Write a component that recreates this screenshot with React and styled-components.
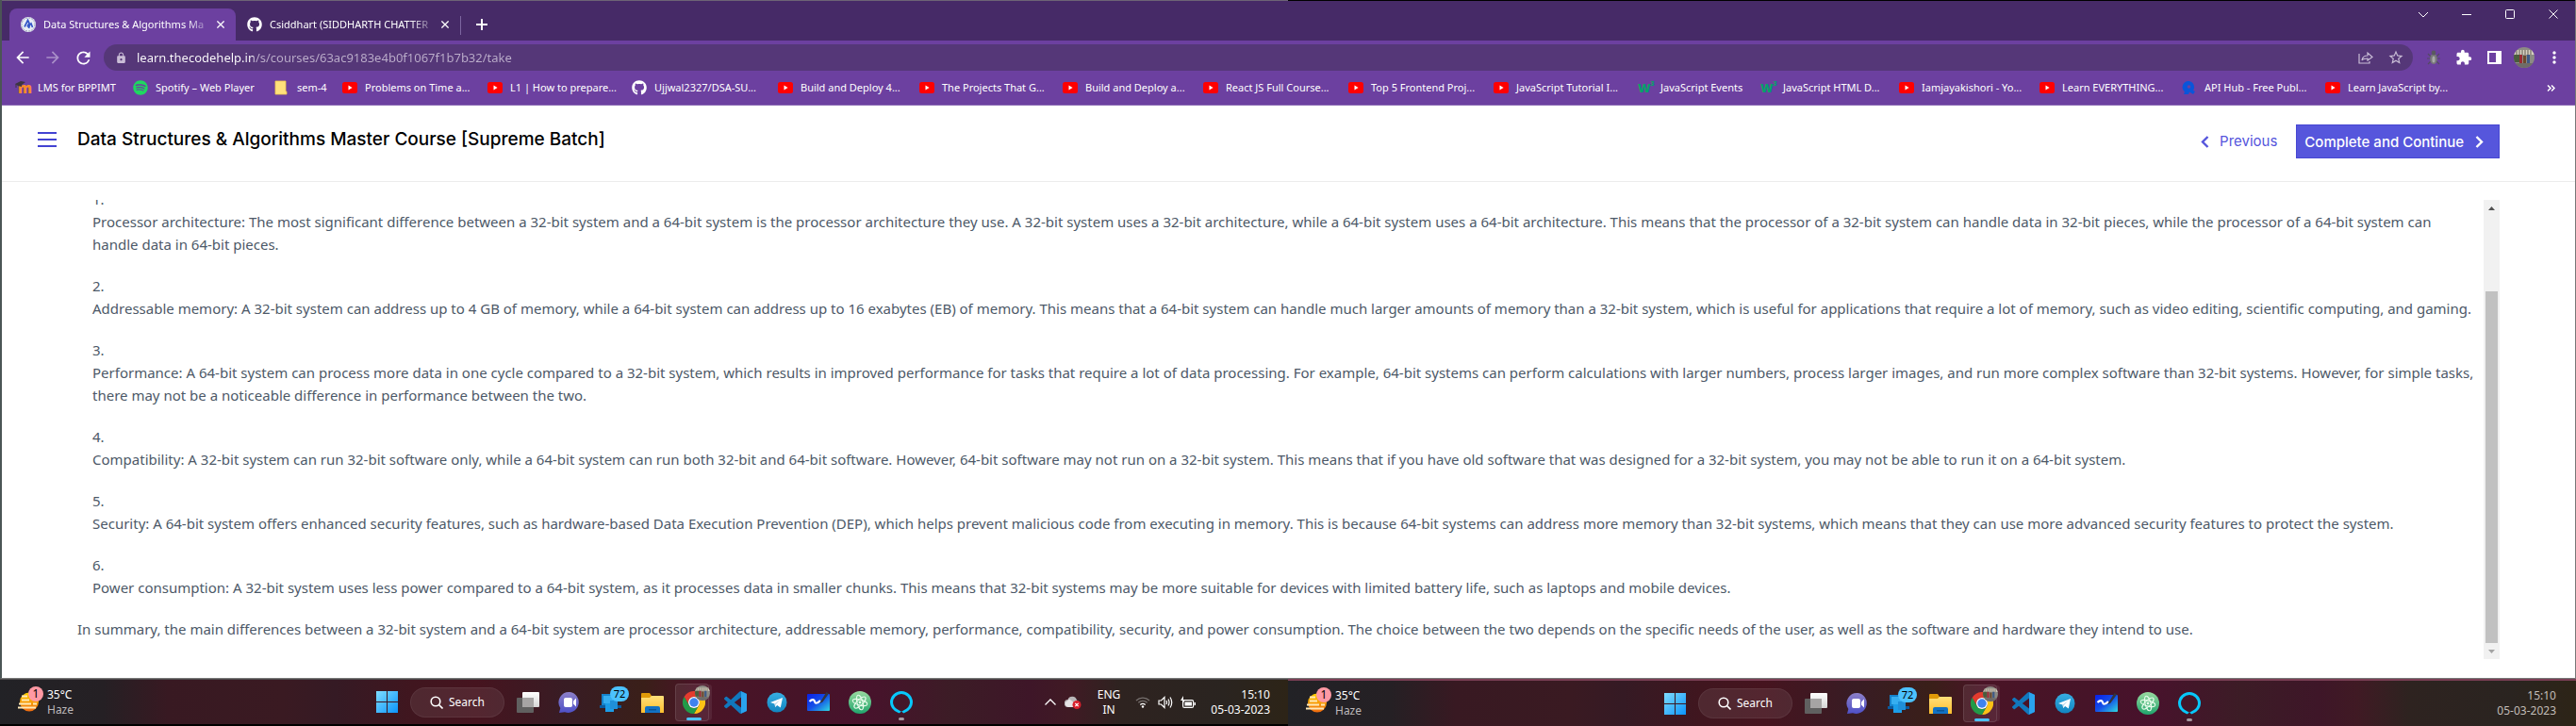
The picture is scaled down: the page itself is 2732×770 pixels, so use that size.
import React from 'react';
import styled, { createGlobalStyle } from 'styled-components';
import { FaGithub, FaSpotify } from 'react-icons/fa';
import { MdArrowBack, MdArrowForward, MdRefresh, MdLock, MdStarBorder, MdExtension, MdMoreVert } from 'react-icons/md';

const Global = createGlobalStyle`
  *, *::before, *::after { box-sizing: border-box; }
  body { margin: 0; background: #000; font-family: "Noto Sans", "Open Sans", sans-serif; }
  button, input { font: inherit; color: inherit; }
  button { border: 0; padding: 0; background: none; cursor: pointer; }
  svg { display: block; flex: none; }
`;

/* ---------- shared pieces ---------- */

const Desktop = styled.div`
  min-height: 100vh;
  display: flex;
  flex-direction: column;
`;

const Browser = styled.div`
  flex: 1;
  display: flex;
  flex-direction: column;
  border-left: 2px solid #4b5555;
  border-right: 1px solid #777;
  border-bottom: 1px solid #777;
  background: #fff;
`;

const IconButton = styled.button`
  display: grid;
  place-items: center;
  flex: none;
  width: ${(p) => p.$w || 32}px;
  height: ${(p) => p.$h || 28}px;
  color: ${(p) => p.$color || '#fff'};
`;

/* ---------- browser chrome ---------- */

const TabStrip = styled.div`
  display: flex;
  align-items: flex-end;
  height: 43px;
  padding-left: 8px;
  background: #462a67;
  border-top: 1px solid;
  border-image: linear-gradient(to right, #6d6476 50%, #000 50%) 1;
`;

const Tab = styled.div`
  display: flex;
  align-items: center;
  width: ${(p) => (p.$active ? 240 : 238)}px;
  height: 34px;
  padding: 0 8px 0 12px;
  border-radius: 8px 8px 0 0;
  background: ${(p) => (p.$active ? '#6c40a0' : 'transparent')};
  color: #fff;
`;

const TabTitle = styled.span`
  flex: 1;
  margin-left: 8px;
  overflow: hidden;
  white-space: nowrap;
  font-size: 11px;
  line-height: 16px;
  mask-image: linear-gradient(to right, #000 84%, transparent);
`;

const TabDivider = styled.span`
  align-self: center;
  width: 1px;
  height: 20px;
  margin-top: 9px;
  background: #7d66a0;
`;

const WindowControls = styled.div`
  display: flex;
  align-self: flex-start;
  margin-left: auto;
`;

const Toolbar = styled.div`
  display: flex;
  align-items: center;
  height: 36px;
  padding: 4px 6px;
  background: #6c40a0;
`;

const AddressBar = styled.label`
  flex: 1;
  display: flex;
  align-items: center;
  height: 28px;
  margin: 0 6px;
  padding: 0 2px 0 12px;
  border-radius: 14px;
  background: #553778;
  color: #c9bdd6;
`;

const AddressInput = styled.input`
  flex: 1;
  height: 28px;
  margin-left: 10px;
  padding: 0;
  border: 0;
  outline: 0;
  font-size: 13px;
  color: transparent;
  background: linear-gradient(to right, #fff 124px, #bcaecb 124px);
  background-clip: text;
`;

const Bookmarks = styled.nav`
  display: flex;
  align-items: center;
  height: 33px;
  padding: 0 20px 4px 14px;
  background: #6c40a0;
  border-bottom: 1px solid #8c6ab4;
`;

const Bookmark = styled.a`
  display: flex;
  align-items: center;
  gap: 8px;
  flex: 0 0 ${(p) => p.$w}px;
  color: #fff;
  font-size: 11px;
  line-height: 16px;
  white-space: nowrap;
  text-decoration: none;
`;

const MoreBookmarks = styled(IconButton)`
  margin-left: auto;
`;

const W3Mark = styled.span`
  width: 16px;
  color: #06a06a;
  font-size: 13px;
  font-weight: 900;
  line-height: 16px;
  display: flex;
`;

const W3Power = styled.sup`
  font-size: 7px;
  line-height: 8px;
`;

const MoodleMark = styled.span`
  width: 16px;
  padding-left: 3px;
  color: #f68a28;
  font-size: 15px;
  font-weight: 900;
  line-height: 16px;
  position: relative;
`;

const MoodleCap = styled.svg`
  position: absolute;
  left: 0;
  top: 0;
`;

const Play = () => (
  <svg width="16" height="16" viewBox="0 0 16 16">
    <rect y="2" width="16" height="12" rx="2.5" fill="#f00" />
    <path d="M6.5 5.6v4.8L10.6 8z" fill="#fff" />
  </svg>
);
const Note = () => (
  <svg width="16" height="16" viewBox="0 0 16 16">
    <path d="M1 1h11v11h1v3H1z" fill="#ffe07c" stroke="#f1c84c" strokeWidth=".8" />
  </svg>
);
const W3 = () => (
  <W3Mark>W<W3Power>3</W3Power></W3Mark>
);
const Moodle = () => (
  <MoodleMark>
    m
    <MoodleCap width="11" height="8" viewBox="0 0 11 8">
      <path d="M0 4 6 1l5 1-4 3v2L3 6z" fill="#3d3540" />
      <path d="M1 4v4" stroke="#3d3540" />
    </MoodleCap>
  </MoodleMark>
);
const ApiHub = () => (
  <svg width="16" height="16" viewBox="0 0 16 16">
    <path d="M7 1a6.500 6.500 0 0 0-4 11.500L2 15h5l1-2.500 4 2.500 2-3-2-1A6.500 6.500 0 0 0 7 1z" fill="#0a55da" />
    <circle cx="7.500" cy="7" r="1.800" fill="#6c40a0" />
  </svg>
);
const Spot = () => <FaSpotify size={16} color="#1ed760" />;
const Hub = () => <FaGithub size={16} />;

const BOOKMARKS = [
  ['LMS for BPPIMT', Moodle, 125],
  ['Spotify – Web Player', Spot, 150],
  ['sem-4', Note, 72],
  ['Problems on Time a...', Play, 154],
  ['L1 | How to prepare...', Play, 153],
  ['Ujjwal2327/DSA-SU...', Hub, 155],
  ['Build and Deploy 4...', Play, 150],
  ['The Projects That G...', Play, 152],
  ['Build and Deploy a...', Play, 149],
  ['React JS Full Course...', Play, 154],
  ['Top 5 Frontend Proj...', Play, 154],
  ['JavaScript Tutorial I...', Play, 153],
  ['JavaScript Events', W3, 130],
  ['JavaScript HTML D...', W3, 147],
  ['Iamjayakishori - Yo...', Play, 149],
  ['Learn EVERYTHING...', Play, 151],
  ['API Hub - Free Publ...', ApiHub, 152],
  ['Learn JavaScript by...', Play, 150],
];

const Cross = ({ size = 8, width = 1.6 }) => (
  <svg width={size} height={size} viewBox="0 0 10 10" fill="none" stroke="currentColor" strokeWidth={width}>
    <path d="M.5.5l9 9M9.500.5l-9 9" />
  </svg>
);

const Favicon = () => (
  <svg width="16" height="16" viewBox="0 0 16 16">
    <circle cx="8" cy="8" r="8" fill="#e9eef6" />
    <circle cx="8" cy="8" r="7" fill="none" stroke="#8a93a6" strokeWidth=".8" strokeDasharray="2 1" />
    <path d="M4 10.500 7.500 3.500l1.500 3-2 4M8.500 12l1-3.500 1.500-1.500 1.500 4" fill="none" stroke="#3558c8" strokeWidth="1.700" />
  </svg>
);

const Portrait = ({ size }) => (
  <svg width={size} height={size} viewBox="0 0 22 22">
    <defs>
      <clipPath id={`portrait-${size}`}><circle cx="11" cy="11" r="11" /></clipPath>
    </defs>
    <g clipPath={`url(#portrait-${size})`}>
      <rect width="22" height="22" fill="#8c8b84" />
      <path d="M0 3h22v5H0z" fill="#d8d2c2" />
      <path d="M3 3v5M6 3v5M9 3v5M12 3v5M15 3v5M18 3v5" stroke="#5f5a50" />
      <path d="M0 8h6v8H0z" fill="#4a5c3c" />
      <path d="M6 8h3v9H6z" fill="#9c2b34" />
      <path d="M10 9h3v9h-3z" fill="#6d4a2c" />
      <path d="M14 8h3v9h-3z" fill="#3e5a86" />
      <path d="M0 17h22v5H0z" fill="#6f6c68" />
    </g>
  </svg>
);

const Bug = () => (
  <svg width="14" height="16" viewBox="0 0 14 16">
    <path d="M1 4l3 3M13 4l-3 3M0 9h14M1 15l3-3M13 15l-3-3" stroke="#544a62" strokeWidth="1.200" />
    <ellipse cx="7" cy="9.500" rx="3.800" ry="5.500" fill="#77777a" />
    <ellipse cx="7" cy="10" rx="1.600" ry="3.500" fill="#a9a9aa" />
    <circle cx="7" cy="3" r="2.400" fill="#59595f" />
  </svg>
);

function BrowserChrome() {
  return (
    <header>
      <TabStrip>
        <Tab $active>
          <Favicon />
          <TabTitle>Data Structures &amp; Algorithms Ma</TabTitle>
          <IconButton $w={16} $h={16} aria-label="Close tab"><Cross /></IconButton>
        </Tab>
        <Tab>
          <FaGithub size={16} />
          <TabTitle>Csiddhart (SIDDHARTH CHATTER</TabTitle>
          <IconButton $w={16} $h={16} aria-label="Close tab"><Cross /></IconButton>
        </Tab>
        <TabDivider />
        <IconButton $w={44} $h={34} aria-label="New tab">
          <svg width="12" height="12" viewBox="0 0 12 12" stroke="currentColor" strokeWidth="2"><path d="M6 0v12M0 6h12" /></svg>
        </IconButton>
        <WindowControls>
          <IconButton $w={46} aria-label="Search tabs">
            <svg width="12" height="7" viewBox="0 0 12 7" fill="none" stroke="currentColor"><path d="M1 1l5 5 5-5" /></svg>
          </IconButton>
          <IconButton $w={46} aria-label="Minimise">
            <svg width="10" height="10" viewBox="0 0 10 10" stroke="currentColor"><path d="M0 5.500h10" /></svg>
          </IconButton>
          <IconButton $w={46} aria-label="Maximise">
            <svg width="10" height="10" viewBox="0 0 10 10" fill="none" stroke="currentColor"><rect x=".5" y=".5" width="9" height="9" rx="1" /></svg>
          </IconButton>
          <IconButton $w={46} aria-label="Close"><Cross size={10} width={1} /></IconButton>
        </WindowControls>
      </TabStrip>
      <Toolbar>
        <IconButton aria-label="Back"><MdArrowBack size={20} /></IconButton>
        <IconButton $color="#a98fc8" aria-label="Forward"><MdArrowForward size={20} /></IconButton>
        <IconButton aria-label="Reload"><MdRefresh size={21} /></IconButton>
        <AddressBar>
          <MdLock size={13} />
          <AddressInput aria-label="Address" defaultValue="learn.thecodehelp.in/s/courses/63ac9183e4b0f1067f1b7b32/take" />
          <IconButton $color="#c9bdd6" aria-label="Share">
            <svg width="16" height="14" viewBox="0 0 16 14" fill="none" stroke="currentColor" strokeWidth="1.200">
              <path d="M1 3v10h11v-2M4 10c.5-4 3-5 6-5V2l5 4.500L10 10V8c-3 0-5 .5-6 2z" />
            </svg>
          </IconButton>
          <IconButton $color="#c9bdd6" aria-label="Bookmark this tab"><MdStarBorder size={18} /></IconButton>
        </AddressBar>
        <IconButton aria-label="Debug extension"><Bug /></IconButton>
        <IconButton aria-label="Extensions"><MdExtension size={18} /></IconButton>
        <IconButton aria-label="Side panel">
          <svg width="15" height="14" viewBox="0 0 15 14"><path d="M0 0h15v14H0zM2 2v10h7V2z" fill="currentColor" fillRule="evenodd" /></svg>
        </IconButton>
        <IconButton aria-label="Profile"><Portrait size={22} /></IconButton>
        <IconButton aria-label="Menu"><MdMoreVert size={20} /></IconButton>
      </Toolbar>
      <Bookmarks aria-label="Bookmarks">
        {BOOKMARKS.map(([label, Icon, w]) => (
          <Bookmark key={label} href="#" $w={w}><Icon />{label}</Bookmark>
        ))}
        <MoreBookmarks $w={12} aria-label="More bookmarks">
          <svg width="9" height="7" viewBox="0 0 9 7" fill="none" stroke="currentColor" strokeWidth="1.500"><path d="M1 .5l3 3-3 3M5 .5l3 3-3 3" /></svg>
        </MoreBookmarks>
      </Bookmarks>
    </header>
  );
}

/* ---------- course page ---------- */

const CourseBar = styled.div`
  display: flex;
  align-items: center;
  height: 81px;
  padding: 0 80px 4px 38px;
  border-bottom: 1px solid #ececec;
  font-family: Inter, "Open Sans", sans-serif;
`;

const CourseTitle = styled.h1`
  flex: 1;
  margin: 0 0 4px 22px;
  color: #000;
  font-size: 19px;
  font-weight: 500;
  line-height: 24px;
`;

const MenuButton = styled.button`
  margin-bottom: 4px;
  color: #4343d2;
`;

const PreviousLink = styled.a`
  display: flex;
  align-items: center;
  gap: 11px;
  margin-right: 20px;
  color: #5555dc;
  font-size: 15px;
  line-height: 24px;
  text-decoration: none;
`;

const ContinueButton = styled.button`
  display: flex;
  align-items: center;
  gap: 12px;
  height: 36px;
  padding: 0 16px 0 8px;
  border: 1px solid #4747d3;
  background: #5656dc;
  color: #fff;
  font-size: 15px;
  font-weight: 500;
`;

const LessonArea = styled.main`
  flex: 1;
  display: flex;
  margin: 19px 80px 20px 80px;
`;

const Lesson = styled.article`
  flex: 1;
  padding-right: 6px;
  overflow: hidden;
  color: #4d5968;
  font-size: 15px;
  line-height: 24px;
`;

const Points = styled.ol`
  list-style: none;
  margin: -13px 0 20px;
  padding: 0 0 0 16px;
`;

const Point = styled.li`
  & + & { margin-top: 20px; }
`;

const Number = styled.div``;

const Paragraph = styled.p`
  margin: 0;
`;

const ScrollTrack = styled.div`
  display: flex;
  flex-direction: column;
  width: 17px;
  background: #f1f1f1;
`;

const ScrollThumb = styled.div`
  flex: 1;
  margin: 80px 2px 0;
  background: #c1c1c1;
`;

const ScrollArrow = styled.button`
  display: grid;
  place-items: center;
  height: 17px;
  color: ${(p) => p.$color};
`;

const POINTS = [
  'Processor architecture: The most significant difference between a 32-bit system and a 64-bit system is the processor architecture they use. A 32-bit system uses a 32-bit architecture, while a 64-bit system uses a 64-bit architecture. This means that the processor of a 32-bit system can handle data in 32-bit pieces, while the processor of a 64-bit system can handle data in 64-bit pieces.',
  'Addressable memory: A 32-bit system can address up to 4 GB of memory, while a 64-bit system can address up to 16 exabytes (EB) of memory. This means that a 64-bit system can handle much larger amounts of memory than a 32-bit system, which is useful for applications that require a lot of memory, such as video editing, scientific computing, and gaming.',
  'Performance: A 64-bit system can process more data in one cycle compared to a 32-bit system, which results in improved performance for tasks that require a lot of data processing. For example, 64-bit systems can perform calculations with larger numbers, process larger images, and run more complex software than 32-bit systems. However, for simple tasks, there may not be a noticeable difference in performance between the two.',
  'Compatibility: A 32-bit system can run 32-bit software only, while a 64-bit system can run both 32-bit and 64-bit software. However, 64-bit software may not run on a 32-bit system. This means that if you have old software that was designed for a 32-bit system, you may not be able to run it on a 64-bit system.',
  'Security: A 64-bit system offers enhanced security features, such as hardware-based Data Execution Prevention (DEP), which helps prevent malicious code from executing in memory. This is because 64-bit systems can address more memory than 32-bit systems, which means that they can use more advanced security features to protect the system.',
  'Power consumption: A 32-bit system uses less power compared to a 64-bit system, as it processes data in smaller chunks. This means that 32-bit systems may be more suitable for devices with limited battery life, such as laptops and mobile devices.',
];

const Chevron = ({ flip }) => (
  <svg width="9" height="13" viewBox="0 0 9 13" fill="none" stroke="currentColor" strokeWidth="2.400">
    <path d={flip ? 'M7.500 1 2 6.500l5.500 5.500' : 'M1.500 1 7 6.500 1.500 12'} />
  </svg>
);

function CoursePage() {
  return (
    <>
      <CourseBar>
        <MenuButton aria-label="Toggle curriculum">
          <svg width="20" height="16" viewBox="0 0 20 16" fill="currentColor"><path d="M0 0h20v2H0zM0 7h20v2H0zM0 14h20v2H0z" /></svg>
        </MenuButton>
        <CourseTitle>Data Structures &amp; Algorithms Master Course [Supreme Batch]</CourseTitle>
        <PreviousLink href="#"><Chevron flip />Previous</PreviousLink>
        <ContinueButton>Complete and Continue<Chevron /></ContinueButton>
      </CourseBar>
      <LessonArea>
        <Lesson>
          <Points>
            {POINTS.map((text, i) => (
              <Point key={i}>
                <Number>{i + 1}.</Number>
                <Paragraph>{text}</Paragraph>
              </Point>
            ))}
          </Points>
          <Paragraph>
            In summary, the main differences between a 32-bit system and a 64-bit system are processor architecture, addressable memory, performance, compatibility, security, and power consumption. The choice between the two depends on the specific needs of the user, as well as the software and hardware they intend to use.
          </Paragraph>
        </Lesson>
        <ScrollTrack>
          <ScrollArrow $color="#505050" aria-label="Scroll up">
            <svg width="7" height="4" viewBox="0 0 7 4" fill="currentColor"><path d="M0 4 3.500 0 7 4z" /></svg>
          </ScrollArrow>
          <ScrollThumb />
          <ScrollArrow $color="#a3a3a3" aria-label="Scroll down">
            <svg width="7" height="4" viewBox="0 0 7 4" fill="currentColor"><path d="M0 0h7L3.500 4z" /></svg>
          </ScrollArrow>
        </ScrollTrack>
      </LessonArea>
    </>
  );
}

/* ---------- task bars ---------- */

const TaskBars = styled.footer`
  display: grid;
  grid-template-columns: 1fr 1fr;
  height: 50px;
`;

const TaskBar = styled.div`
  display: flex;
  align-items: center;
  padding: ${(p) => (p.$second ? '0 21px 0 19px' : '0 19px 0 19px')};
  border-top: ${(p) => (p.$second ? '2px solid #7a3f55' : '1px solid #4e4a4c')};
  border-bottom: ${(p) => (p.$second ? 0 : 2)}px solid #000;
  background: linear-gradient(to right, #222226 0, #252024 8%, #381922 13%, #3a1a22 22%, #351a24 26%,
    #40161f 32%, #46141f 37%, #381c24 44%, #3a1f19 50%, #4a1426 54%, #461428 62%, #48122c 67%,
    #3c1c26 74%, #3e1628 80%, #401a24 83%, #2e2320 87%, #2a2420 95%, #2d2417 100%);
  color: #fff;
  font-size: 12px;
  line-height: 16px;
`;

const Weather = styled.button`
  display: flex;
  align-items: center;
  gap: 7px;
  flex: 0 0 369px;
  text-align: left;
`;

const WeatherText = styled.span`
  display: flex;
  flex-direction: column;
`;

const Dim = styled.span`
  color: #bdb9bb;
`;

const AppRow = styled.div`
  display: flex;
  align-items: center;
`;

const AppButton = styled.button`
  position: relative;
  display: grid;
  place-items: center;
  width: 44px;
  height: 40px;
`;

const ActiveApp = styled(AppButton)`
  &::before {
    content: "";
    position: absolute;
    inset: 0 6px 0 2px;
    border: 1px solid #ffffff1c;
    border-radius: 4px;
    background: #ffffff14;
    box-shadow: 4px 0 0 -1px #ffffff12;
  }
  &::after {
    content: "";
    position: absolute;
    left: 14px;
    bottom: 1px;
    width: 16px;
    height: 3px;
    border-radius: 2px;
    background: #4cc2ff;
  }
  svg { position: relative; }
`;

const IdleApp = styled(AppButton)`
  &::after {
    content: "";
    position: absolute;
    left: 19px;
    bottom: 1px;
    width: 6px;
    height: 3px;
    border-radius: 2px;
    background: #a59aa2;
  }
`;

const CountBadge = styled.span`
  position: absolute;
  top: 3px;
  right: 3px;
  min-width: 20px;
  height: 16px;
  border-radius: 8px;
  background: #4cc2ff;
  color: #000;
  font-size: 11px;
  text-align: center;
`;

const ProfileBadge = styled.span`
  position: absolute;
  top: 2px;
  right: 5px;
`;

const WeatherIcon = styled.span`
  position: relative;
  width: 24px;
  height: 24px;
`;

const WeatherBadge = styled.span`
  position: absolute;
  top: -5px;
  right: -3px;
  width: 16px;
  height: 16px;
  border-radius: 50%;
  background: #ff99a4;
  color: #000;
  text-align: center;
`;

const SearchPill = styled.button`
  display: flex;
  align-items: center;
  justify-content: center;
  gap: 6px;
  width: 100px;
  height: 32px;
  margin: 0 3px;
  border: 1px solid #ffffff10;
  border-radius: 16px;
  background: #ffffff14;
`;

const Tray = styled.div`
  display: flex;
  align-items: center;
  gap: 8px;
  margin-left: auto;
`;

const Language = styled.button`
  width: 40px;
  text-align: center;
`;

const Clock = styled.time`
  width: 71px;
  text-align: right;
  color: ${(p) => (p.$dim ? '#c2bdb8' : '#fff')};
`;

const Haze = () => (
  <svg width="24" height="24" viewBox="0 0 24 24">
    <defs><linearGradient id="haze" x2="0" y2="1"><stop stopColor="#ffd000" /><stop offset="1" stopColor="#f06a10" /></linearGradient></defs>
    <circle cx="12" cy="11.500" r="10" fill="url(#haze)" />
    <path d="M4 5.500h6M4 9.500h8M1 13.500h13M16 13.500h4M0 17.500h19" stroke="#ffe9b8" strokeWidth="1.800" />
  </svg>
);
const StartLogo = () => (
  <svg width="23" height="23" viewBox="0 0 23 23">
    <defs><linearGradient id="start" x2="1" y2="1"><stop stopColor="#7fdcff" /><stop offset="1" stopColor="#0a94fb" /></linearGradient></defs>
    <path d="M0 0h11v11H0zM12 0h11v11H12zM0 12h11v11H0zM12 12h11v11H12z" fill="url(#start)" />
  </svg>
);
const TaskView = () => (
  <svg width="24" height="24" viewBox="0 0 24 24">
    <defs><linearGradient id="view" x2="0" y2="1"><stop stopColor="#fff" /><stop offset="1" stopColor="#d4d4d4" /></linearGradient></defs>
    <rect x="6" y="1" width="18" height="16" rx="1" fill="url(#view)" />
    <rect y="7" width="18" height="16" rx="1" fill="#606060" />
    <path d="M6 7h12v10H6z" fill="#a6a4a4" />
  </svg>
);
const Chat = () => (
  <svg width="24" height="24" viewBox="0 0 24 24">
    <defs><linearGradient id="chat" x2="0" y2="1"><stop stopColor="#8d80c8" /><stop offset="1" stopColor="#4e50c8" /></linearGradient></defs>
    <path d="M12.500 1A11 11 0 1 1 7 22.200L1 23l1.300-5A11 11 0 0 1 12.500 1z" fill="url(#chat)" />
    <rect x="6" y="7" width="9" height="10" rx="2" fill="#fff" />
    <path d="M16 10.500 19 7.500v9l-3-3z" fill="#fff" />
  </svg>
);
const PhoneLink = () => (
  <svg width="24" height="24" viewBox="0 0 24 24">
    <path d="M2 3h14v13H2z" fill="#1583cc" />
    <path d="M0 15h23v3H0z" fill="#0a5a9e" />
    <path d="M6 8h9v14H6z" fill="#1b9de8" />
    <path d="M4 5h10v8H4z" fill="#36aef0" />
    <path d="M11 10h8v9h-8z" fill="#1f8fd8" />
  </svg>
);
const Explorer = () => (
  <svg width="24" height="24" viewBox="0 0 24 24">
    <defs><linearGradient id="folder" x2="0" y2="1"><stop stopColor="#ffe07a" /><stop offset="1" stopColor="#ffbe2e" /></linearGradient></defs>
    <path d="M0 3a1 1 0 0 1 1-1h8l2 3v3H0z" fill="#e09a08" />
    <path d="M0 7h9l2-2h12a1 1 0 0 1 1 1v17H0z" fill="url(#folder)" />
    <path d="M4 23v-5a2 2 0 0 1 2-2h12a2 2 0 0 1 2 2v5z" fill="#1272c4" />
    <path d="M8 19h8v1.500H8z" fill="#0b5494" />
  </svg>
);
const Chrome = () => (
  <svg width="24" height="24" viewBox="0 0 48 48">
    <path d="M24 12h20.800A24 24 0 0 0 3.200 12l10.400 18A12 12 0 0 1 24 12z" fill="#e33b2e" />
    <path d="M34.400 30 24 48a24 24 0 0 0 20.800-36H24a12 12 0 0 1 10.400 18z" fill="#fbc116" />
    <path d="M13.600 30 3.200 12A24 24 0 0 0 24 48l10.400-18a12 12 0 0 1-20.800 0z" fill="#229a48" />
    <circle cx="24" cy="24" r="12" fill="#fff" />
    <circle cx="24" cy="24" r="9.500" fill="#3f82ee" />
  </svg>
);
const Code = () => (
  <svg width="24" height="24" viewBox="0 0 24 24">
    <path d="M23.150 2.587L18.210.21a1.494 1.494 0 0 0-1.705.29l-9.460 8.630-4.120-3.128a.999.999 0 0 0-1.276.057L.327 7.261A1 1 0 0 0 .326 8.740L3.899 12 .326 15.260a1 1 0 0 0 .001 1.479L1.650 17.940a.999.999 0 0 0 1.276.057l4.120-3.128 9.460 8.630a1.492 1.492 0 0 0 1.704.29l4.942-2.377A1.500 1.500 0 0 0 24 20.060V3.939a1.500 1.500 0 0 0-.850-1.352zm-5.146 14.861L10.826 12l7.178-5.448v10.896z" fill="#1178bd" />
    <path d="M18 .2 24 3v18l-6 2.800z" fill="#2aa3ee" />
  </svg>
);
const Plane = () => (
  <svg width="24" height="24" viewBox="0 0 24 24">
    <defs><linearGradient id="plane" x2="0" y2="1"><stop stopColor="#37aee2" /><stop offset="1" stopColor="#1185c0" /></linearGradient></defs>
    <circle cx="12" cy="12" r="10.500" fill="url(#plane)" />
    <path d="M5 12 18 7l-2.200 10.500-3.600-2.600-2 2-.7-3.500z" fill="#fff" />
    <path d="M9.500 13.400 15.500 9l-4.800 5.200-.5 2.500z" fill="#b8d8ea" />
  </svg>
);
const Whiteboard = () => (
  <svg width="24" height="24" viewBox="0 0 24 24">
    <defs><linearGradient id="board" x2="1" y2="1"><stop stopColor="#0a1ee8" /><stop offset=".5" stopColor="#1450e8" /><stop offset="1" stopColor="#30d8e0" /></linearGradient></defs>
    <rect y="3" width="24" height="18" rx="1" fill="url(#board)" />
    <path d="M2.500 11c3-3 5-2 5.500 0s2 3 6-1" fill="none" stroke="#fff" strokeWidth="2.200" />
    <path d="M14 11.500 20.500 1l2.500 1.500-6.500 9-3 1.500z" fill="#33343c" />
  </svg>
);
const Atom = () => (
  <svg width="24" height="24" viewBox="0 0 24 24">
    <defs><linearGradient id="atom" x2="0" y2="1"><stop stopColor="#9ad9a0" /><stop offset="1" stopColor="#1fa56c" /></linearGradient></defs>
    <circle cx="12" cy="12" r="12" fill="url(#atom)" />
    <g fill="none" stroke="#e6fbea" strokeWidth="1.100">
      <ellipse cx="12" cy="12" rx="8" ry="3" transform="rotate(15 12 12)" />
      <ellipse cx="12" cy="12" rx="8" ry="3" transform="rotate(75 12 12)" />
      <ellipse cx="12" cy="12" rx="8" ry="3" transform="rotate(135 12 12)" />
    </g>
    <circle cx="12" cy="12" r="1.400" fill="#e6fbea" />
  </svg>
);
const Ring = () => (
  <svg width="24" height="24" viewBox="0 0 24 24" fill="none" stroke="#07c8fb" strokeWidth="3">
    <path d="M10.800 22.600C9.800 21.500 1.500 20 1.500 12a10.500 10.500 0 0 1 21 0c0 8-8.300 9.500-9.300 10.600" />
  </svg>
);

function TrayIcons() {
  return (
    <>
      <IconButton $w={12} aria-label="Show hidden icons">
        <svg width="12" height="7" viewBox="0 0 12 7" fill="none" stroke="currentColor" strokeWidth="1.300"><path d="M.5 6.500 6 1l5.500 5.500" /></svg>
      </IconButton>
      <IconButton $w={20} aria-label="Cloud storage">
        <svg width="18" height="14" viewBox="0 0 18 14">
          <path d="M4 12a4 4 0 0 1-.5-8A5 5 0 0 1 13 4.500 3.500 3.500 0 0 1 13 11z" fill="#b9b6b8" />
          <path d="M5 3.500 13 9l-4 3H4a4 4 0 0 1-3-5z" fill="#e6e4e5" />
          <circle cx="13" cy="9.500" r="4.500" fill="#d8202c" />
          <path d="M11.300 7.800l3.400 3.400M14.700 7.800l-3.400 3.400" stroke="#fff" strokeWidth="1.200" />
        </svg>
      </IconButton>
      <Language>ENG<br />IN</Language>
      <IconButton $w={16} aria-label="Network">
        <svg width="16" height="13" viewBox="0 0 16 13" fill="none" stroke="#fff" strokeWidth="1.300">
          <path d="M1 5a10 10 0 0 1 14 0" opacity=".35" />
          <path d="M3.300 7.300a6.700 6.700 0 0 1 9.400 0" opacity=".35" />
          <path d="M5.300 9.600a4 4 0 0 1 5.400 0" />
          <circle cx="8" cy="11.500" r="1.200" fill="#fff" stroke="none" />
        </svg>
      </IconButton>
      <IconButton $w={16} aria-label="Volume">
        <svg width="16" height="14" viewBox="0 0 16 14" fill="none" stroke="#fff" strokeWidth="1.200">
          <path d="M1 5h2.500L7 1.500v11L3.500 9H1zM9 5q1 2 0 4M11 3.500q2 3.500 0 7M13 1.500q3.500 5.500 0 11" />
        </svg>
      </IconButton>
      <IconButton $w={16} aria-label="Battery">
        <svg width="16" height="14" viewBox="0 0 16 14">
          <rect x="2.600" y="4.600" width="11" height="7.800" rx="1.500" fill="none" stroke="#fff" strokeWidth="1.200" />
          <path d="M4.500 6.500h7.500v4H4.500zM14.500 7H16v3h-1.500zM3 0 0 5h2v4l3-5H3z" fill="#fff" />
        </svg>
      </IconButton>
    </>
  );
}

function SystemBar({ second }) {
  return (
    <TaskBar $second={second}>
      <Weather>
        <WeatherIcon><Haze /><WeatherBadge>1</WeatherBadge></WeatherIcon>
        <WeatherText><span>35°C</span><Dim>Haze</Dim></WeatherText>
      </Weather>
      <AppRow>
        <AppButton aria-label="Start"><StartLogo /></AppButton>
        <SearchPill>
          <svg width="14" height="14" viewBox="0 0 14 14" fill="none" stroke="currentColor" strokeWidth="1.600">
            <circle cx="6" cy="6" r="4.800" /><path d="M9.500 9.500l4 4" />
          </svg>
          <span>Search</span>
        </SearchPill>
        <AppButton aria-label="Task view"><TaskView /></AppButton>
        <AppButton aria-label="Chat"><Chat /></AppButton>
        <AppButton aria-label="Phone link"><PhoneLink /><CountBadge>72</CountBadge></AppButton>
        <AppButton aria-label="File explorer"><Explorer /></AppButton>
        <ActiveApp aria-label="Chrome"><Chrome /><ProfileBadge><Portrait size={16} /></ProfileBadge></ActiveApp>
        <AppButton aria-label="Code editor"><Code /></AppButton>
        <AppButton aria-label="Telegram"><Plane /></AppButton>
        <AppButton aria-label="Whiteboard"><Whiteboard /></AppButton>
        <AppButton aria-label="Atom"><Atom /></AppButton>
        <IdleApp aria-label="Assistant"><Ring /></IdleApp>
      </AppRow>
      <Tray>
        {!second && <TrayIcons />}
        <Clock $dim={second}>15:10<br />05-03-2023</Clock>
      </Tray>
    </TaskBar>
  );
}

export default function App() {
  return (
    <Desktop>
      <Global />
      <Browser>
        <BrowserChrome />
        <CoursePage />
      </Browser>
      <TaskBars>
        <SystemBar />
        <SystemBar second />
      </TaskBars>
    </Desktop>
  );
}
